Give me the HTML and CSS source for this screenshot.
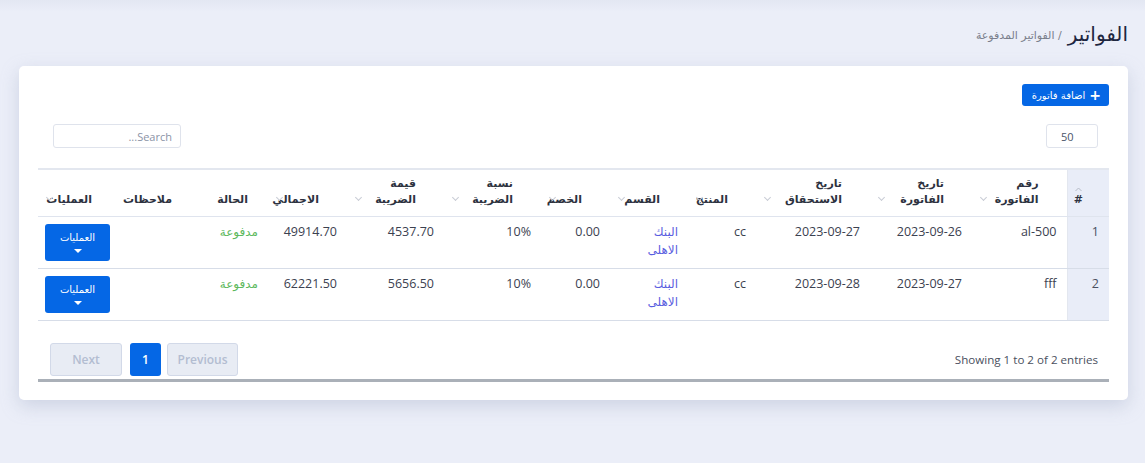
FILE: index.html
```html
<!DOCTYPE html>
<html lang="ar" dir="rtl">
<head>
<meta charset="utf-8">
<link rel="stylesheet" href="styles.css">
</head>
<body>
<div class="page">
  <div class="page-head">
    <h1 class="title">الفواتير</h1>
    <span class="crumb">/ الفواتير المدفوعة</span>
  </div>
  <div class="card">
    <div class="toolbar">
      <button class="btn-add"><span class="plus">+</span> اضافة فاتورة</button>
    </div>
    <div class="controls">
      <div class="length">50</div>
      <div class="search">Search...</div>
    </div>
    <table class="grid">
      <colgroup>
        <col style="width:42px"><col style="width:95px"><col style="width:102px"><col style="width:114px"><col style="width:68px"><col style="width:78px"><col style="width:69px"><col style="width:97px"><col style="width:97px"><col style="width:79px"><col style="width:86px"><col style="width:62px"><col style="width:82px">
      </colgroup>
      <thead>
        <tr>
          <th class="idx sort"><span class="up"><svg width="7" height="5" viewBox="0 0 7 5"><path d="M0.5 4L3.5 1L6.5 4" fill="none" stroke="#b5bac6" stroke-width="1"/></svg></span>#</th>
          <th class="sort">رقم الفاتورة<i class="ic"></i></th>
          <th class="sort">تاريخ الفاتورة<i class="ic"></i></th>
          <th class="sort">تاريخ الاستحقاق<i class="ic"></i></th>
          <th class="sort">المنتج<i class="ic"></i></th>
          <th class="sort">القسم<i class="ic"></i></th>
          <th class="sort">الخصم<i class="ic"></i></th>
          <th class="sort">نسبة الضريبة<i class="ic"></i></th>
          <th class="sort">قيمة الضريبة<i class="ic"></i></th>
          <th class="sort">الاجمالي<i class="ic"></i></th>
          <th class="plain">الحالة</th>
          <th class="plain">ملاحظات</th>
          <th class="sort">العمليات<i class="ic"></i></th>
        </tr>
      </thead>
      <tbody>
        <tr>
          <td class="idx">1</td>
          <td>al-500</td>
          <td>2023-09-26</td>
          <td>2023-09-27</td>
          <td>cc</td>
          <td class="link">البنك الاهلى</td>
          <td>0.00</td>
          <td>10%</td>
          <td>4537.70</td>
          <td>49914.70</td>
          <td class="paid">مدفوعة</td>
          <td></td>
          <td><button class="btn-ops">العمليات<span class="caret"></span></button></td>
        </tr>
        <tr>
          <td class="idx">2</td>
          <td>fff</td>
          <td>2023-09-27</td>
          <td>2023-09-28</td>
          <td>cc</td>
          <td class="link">البنك الاهلى</td>
          <td>0.00</td>
          <td>10%</td>
          <td>5656.50</td>
          <td>62221.50</td>
          <td class="paid">مدفوعة</td>
          <td></td>
          <td><button class="btn-ops">العمليات<span class="caret"></span></button></td>
        </tr>
      </tbody>
    </table>
    <div class="footer">
      <div class="info">Showing 1 to 2 of 2 entries</div>
      <div class="pager">
        <span class="pg disabled prev">Previous</span>
        <span class="pg active">1</span>
        <span class="pg disabled next">Next</span>
      </div>
    </div>
    <div class="bar"></div>
  </div>
</div>
</body>
</html>
```

FILE: styles.css
```css
* { box-sizing: border-box; }
html, body { margin: 0; padding: 0; }
body {
  background: #ebeef8;
  font-family: "Open Sans", "DejaVu Sans", sans-serif;
  color: #3b4150;
  width: 1145px;
  height: 463px;
  overflow: hidden;
}
.page {
  padding: 0 17px 0 19px;
  background: linear-gradient(#e3e7f2 0, #ebeef8 12px);
  height: 463px;
}
.page-head {
  height: 66px;
  display: flex;
  align-items: center;
  gap: 6px;
  padding-top: 2px;
}
.title {
  margin: 0;
  font-family: "DejaVu Sans", sans-serif;
  font-weight: normal;
  font-size: 20px;
  color: #1e2640;
}
.crumb {
  font-family: "DejaVu Sans", sans-serif;
  font-size: 11px;
  color: #7a7f8c;
  padding-top: 3px;
}
.card {
  background: #fff;
  border-radius: 5px;
  box-shadow: 0 6px 18px rgba(150, 160, 190, 0.35);
  padding: 18px 19px 19px;
  height: 334px;
}
.toolbar {
  display: flex;
  justify-content: flex-start;
}
.btn-add {
  height: 22px;
  width: 87px;
  border: none;
  border-radius: 3px;
  background: #0567e5;
  color: #fff;
  font-family: "DejaVu Sans", sans-serif;
  font-size: 10px;
  padding: 0 8px;
  display: flex;
  align-items: center;
  gap: 4px;
}
.plus { font-weight: bold; font-size: 14px; line-height: 1; }
.controls {
  margin-top: 18px;
  display: flex;
  justify-content: space-between;
  align-items: center;
  padding: 0 11px 0 15px;
}
.length {
  width: 52px;
  height: 24px;
  border: 1px solid #dfe3ec;
  border-radius: 3px;
  font-size: 11px;
  color: #4a5468;
  display: flex;
  align-items: center;
  direction: ltr;
  justify-content: flex-start;
  padding-left: 14px;
}
.search {
  width: 128px;
  height: 24px;
  border: 1px solid #dfe3ec;
  border-radius: 3px;
  font-size: 11px;
  color: #8a93a6;
  display: flex;
  align-items: center;
  padding: 0 8px;
}
.grid {
  margin-top: 20px;
  width: 1071px;
  border-collapse: collapse;
  table-layout: fixed;
  border-top: 2px solid #e3e7ef;
  border-bottom: 1px solid #d7dde8;
}
.grid th {
  position: relative;
  vertical-align: bottom;
  text-align: right;
  font-family: "DejaVu Sans", sans-serif;
  font-size: 11px;
  font-weight: bold;
  color: #2d3240;
  line-height: 16px;
  padding: 6px 28px 8px 8px;
  height: 46px;
  border-bottom: 1px solid #dfe4ee;
}
.grid th.plain { padding-right: 20px; }
.grid th:nth-child(12) { padding-right: 10px; }
.grid th .ic {
  position: absolute;
  left: 9px;
  bottom: 16px;
  width: 5px;
  height: 5px;
  border-right: 1px solid #c8ccd5;
  border-bottom: 1px solid #c8ccd5;
  transform: rotate(45deg);
}
.grid th.idx { padding-right: 26px; }
.grid th.idx .up {
  position: absolute;
  right: 27px;
  top: 17px;
  line-height: 0;
}
.grid .idx { background: #e9edf8; border-left: 1px solid #e3e7ef; }
.grid td {
  vertical-align: top;
  text-align: right;
  font-size: 12.5px;
  line-height: 18px;
  padding: 6px 10px 6px;
  height: 52px;
  color: #3b4150;
  border-bottom: 1px solid #d7dde8;
}
.grid td.link, .grid td.paid {
  font-family: "DejaVu Sans", sans-serif;
  font-size: 12px;
}
.grid td.link { color: #5a5ee0; }
.grid td.paid { color: #5cb85c; }
.grid td.idx { color: #4a5060; }
.btn-ops {
  width: 65px;
  height: 37px;
  border: none;
  border-radius: 3px;
  background: #0567e5;
  color: #fff;
  font-family: "DejaVu Sans", sans-serif;
  font-size: 10px;
  display: flex;
  flex-direction: column;
  align-items: center;
  justify-content: center;
  gap: 6px;
  padding: 0;
  margin-top: 1px;
}
.caret {
  width: 0; height: 0;
  border-left: 4px solid transparent;
  border-right: 4px solid transparent;
  border-top: 4px solid #fff;
}
.footer {
  display: flex;
  justify-content: space-between;
  align-items: center;
  padding: 22px 11px 0 12px;
}
.info {
  font-size: 11.6px;
  color: #4a5060;
  direction: ltr;
}
.pager {
  display: flex;
  gap: 6px;
  direction: rtl;
}
.pg {
  height: 33px;
  display: flex;
  align-items: center;
  justify-content: center;
  font-size: 12px;
  border-radius: 3px;
  font-weight: 600;
}
.pg.disabled {
  background: #e8ecf4;
  border: 1px solid #d2d9e8;
  color: #b3bdd1;
}
.pg.prev { width: 71px; }
.pg.next { width: 72px; margin-right: 2px; }
.pg.active {
  background: #0567e5;
  color: #fff;
  width: 31px;
}
.bar {
  margin-top: 3px;
  height: 3px;
  background: #aab0b8;
}
```
